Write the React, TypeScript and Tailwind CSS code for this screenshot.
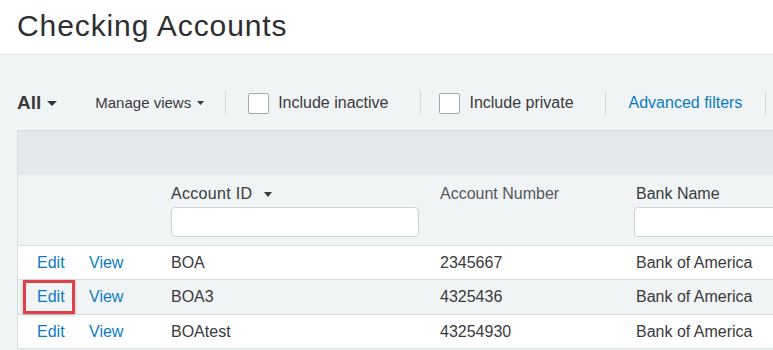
const rows = [
  { id: 'BOA', number: '2345667', bank: 'Bank of America', striped: false, marked: false },
  { id: 'BOA3', number: '4325436', bank: 'Bank of America', striped: true, marked: true },
  { id: 'BOAtest', number: '43254930', bank: 'Bank of America', striped: false, marked: false },
];

function Caret({ w, h, className }: { w: number; h: number; className?: string }) {
  return (
    <svg width={w} height={h} viewBox={`0 0 ${w} ${h}`} className={className} fill="currentColor">
      <path d={`M0 0H${w}L${w / 2} ${h}Z`} />
    </svg>
  );
}

function Divider({ className }: { className?: string }) {
  return <div className={`w-px h-[24px] bg-[#d4d8db] ${className ?? ''}`} />;
}

function Checkbox({ label, className }: { label: string; className?: string }) {
  return (
    <label className={`flex items-center ${className ?? ''}`}>
      <span className="w-[21px] h-[21px] bg-white border border-[#a5a9ad] rounded-[2px]" />
      <span className="ml-[9px] text-[16px] text-[#393a3d]">{label}</span>
    </label>
  );
}

export default function App() {
  return (
    <div
      className="w-[773px] h-[350px] overflow-hidden bg-[#f1f4f5] text-[#393a3d]"
      style={{ fontFamily: '"Liberation Sans", Arial, sans-serif' }}
    >
      <div className="h-[55px] bg-white border-b border-[#e3e7e9] pl-[17px] pt-[9px]">
        <h1 className="text-[30px] leading-[34px] tracking-[0.9px] text-[#2d2e31]">Checking Accounts</h1>
      </div>

      <div className="flex items-center h-[26px] mt-[35px] pl-[17px] whitespace-nowrap">
        <span className="text-[19px] font-bold leading-[22px]">All</span>
        <Caret w={10} h={5} className="ml-[6px]" />
        <span className="ml-[38px] text-[15px]">Manage views</span>
        <Caret w={7} h={4} className="ml-[6px]" />
        <Divider className="ml-[21px]" />
        <Checkbox label="Include inactive" className="ml-[22px]" />
        <Divider className="ml-[32px]" />
        <Checkbox label="Include private" className="ml-[18px]" />
        <Divider className="ml-[31px]" />
        <button className="ml-[23px] text-[16px] text-[#0b7bc1]">Advanced filters</button>
        <Divider className="ml-[23px]" />
      </div>

      <div className="ml-[17px] mt-[14px] w-[820px] border-l border-t border-[#d9dfe1]">
        <div className="h-[44px] bg-[#e4e9eb]" />
        <div className="grid grid-cols-[71px_82px_269px_194px_1fr] h-[71px] pt-[10px] border-b border-[#d9dee0] bg-[#f1f4f5] text-[16px] leading-[18px]">
          <div />
          <div />
          <div>
            <div className="flex items-center">
              <span className="tracking-[0.3px]">Account ID</span>
              <Caret w={8} h={5} className="ml-[12px]" />
            </div>
            <input className="mt-[4px] w-[248px] h-[30px] bg-white border border-[#cfd3d7] rounded-[4px]" />
          </div>
          <div className="text-[#55575c]">Account Number</div>
          <div>
            <div className="pl-[2px]">Bank Name</div>
            <input className="mt-[4px] w-[220px] h-[30px] bg-white border border-[#cfd3d7] rounded-[4px]" />
          </div>
        </div>

        {rows.map((r) => (
          <div
            key={r.id}
            className={`grid grid-cols-[71px_82px_269px_194px_1fr] items-center border-b border-[#d9dee0] text-[16px] ${r.striped ? 'h-[35px] bg-[#f1f4f5]' : 'h-[34px] bg-white'}`}
          >
            <div className="relative h-full flex items-center pl-[19px]">
              {r.marked && (
                <span className="absolute left-[5px] top-0 w-[52px] h-[34px] border-[3px] border-[#df4146] shadow-[0_1px_3px_rgba(0,0,0,0.25)]" />
              )}
              <span className="text-[#0b7bc1]">Edit</span>
            </div>
            <div className="text-[#0b7bc1]">View</div>
            <div>{r.id}</div>
            <div>{r.number}</div>
            <div className="pl-[2px]">{r.bank}</div>
          </div>
        ))}
      </div>
    </div>
  );
}
